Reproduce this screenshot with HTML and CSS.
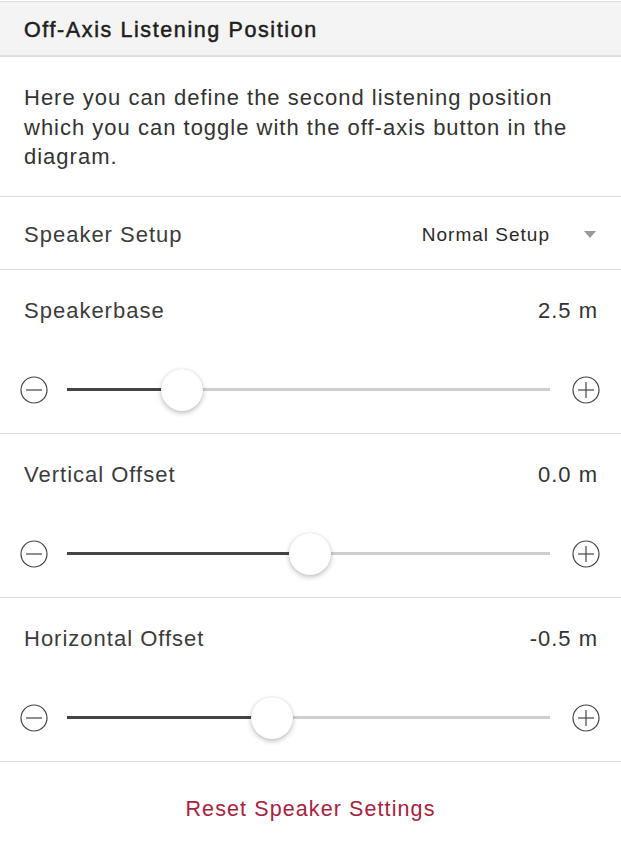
FILE: index.html
```html
<!DOCTYPE html>
<html>
<head>
<meta charset="utf-8">
<link rel="stylesheet" href="styles.css">
</head>
<body>
<div class="panel">
  <div class="header">Off-Axis Listening Position</div>
  <div class="desc">Here you can define the second listening position which you can toggle with the off-axis button in the diagram.</div>
  <div class="setup-row">
    <span class="label">Speaker Setup</span>
    <span class="select">Normal Setup<span class="caret"></span></span>
  </div>

  <div class="slider-section">
    <div class="slider-head"><span class="label">Speakerbase</span><span class="value">2.5 m</span></div>
    <div class="slider-row">
      <svg class="btn" viewBox="0 0 28 28"><circle cx="14" cy="14" r="13" /><line x1="6" y1="14" x2="22" y2="14" /></svg>
      <div class="track"><div class="fill" style="width:23.8%"></div><div class="thumb" style="left:23.8%"></div></div>
      <svg class="btn" viewBox="0 0 28 28"><circle cx="14" cy="14" r="13" /><line x1="6" y1="14" x2="22" y2="14" /><line x1="14" y1="6" x2="14" y2="22" /></svg>
    </div>
  </div>

  <div class="slider-section">
    <div class="slider-head"><span class="label">Vertical Offset</span><span class="value">0.0 m</span></div>
    <div class="slider-row">
      <svg class="btn" viewBox="0 0 28 28"><circle cx="14" cy="14" r="13" /><line x1="6" y1="14" x2="22" y2="14" /></svg>
      <div class="track"><div class="fill" style="width:50.3%"></div><div class="thumb" style="left:50.3%"></div></div>
      <svg class="btn" viewBox="0 0 28 28"><circle cx="14" cy="14" r="13" /><line x1="6" y1="14" x2="22" y2="14" /><line x1="14" y1="6" x2="14" y2="22" /></svg>
    </div>
  </div>

  <div class="slider-section">
    <div class="slider-head"><span class="label">Horizontal Offset</span><span class="value">-0.5 m</span></div>
    <div class="slider-row">
      <svg class="btn" viewBox="0 0 28 28"><circle cx="14" cy="14" r="13" /><line x1="6" y1="14" x2="22" y2="14" /></svg>
      <div class="track"><div class="fill" style="width:42.4%"></div><div class="thumb" style="left:42.4%"></div></div>
      <svg class="btn" viewBox="0 0 28 28"><circle cx="14" cy="14" r="13" /><line x1="6" y1="14" x2="22" y2="14" /><line x1="14" y1="6" x2="14" y2="22" /></svg>
    </div>
  </div>

  <div class="reset">Reset Speaker Settings</div>
</div>
</body>
</html>
```
FILE: styles.css
```css
html, body {
  margin: 0;
  padding: 0;
  background: #fff;
}
body {
  font-family: "Liberation Sans", Arial, sans-serif;
  color: #3a3a3a;
  font-size: 22px;
  letter-spacing: 1px;
}
.panel {
  width: 621px;
  padding-top: 1px;
}
.header {
  border-top: 1px solid #dedede;
  border-bottom: 2px solid #dedede;
  background: #f4f4f4;
  height: 50px;
  padding-top: 3px;
  line-height: 50px;
  padding-left: 24px;
  font-size: 21.5px;
  color: #1e1e1e;
  letter-spacing: 1.6px;
  -webkit-text-stroke: 0.5px #1e1e1e;
}
.desc {
  padding: 26px 24px 24px 24px;
  line-height: 29.5px;
  color: #333;
  border-bottom: 1px solid #dcdcdc;
}
.setup-row {
  box-sizing: border-box;
  height: 73px;
  padding: 4px 25px 0 24px;
  display: flex;
  align-items: center;
  justify-content: space-between;
  border-bottom: 1px solid #dcdcdc;
}
.label {
  color: #3c3c3c;
}
.select {
  display: flex;
  align-items: center;
  font-size: 19px;
  letter-spacing: 1px;
  color: #2a2a2a;
}
.caret {
  width: 0;
  height: 0;
  border-left: 6px solid transparent;
  border-right: 6px solid transparent;
  border-top: 7px solid #999;
  margin-left: 34px;
}
.slider-section {
  padding: 29px 0 22px;
  border-bottom: 1px solid #dcdcdc;
}
.slider-head {
  display: flex;
  justify-content: space-between;
  padding: 0 23px 0 24px;
  line-height: 24px;
  margin-bottom: 46px;
}
.value {
  color: #333;
}
.slider-row {
  height: 42px;
  display: flex;
  align-items: center;
  padding: 0 21px 0 20px;
}
.btn {
  width: 28px;
  height: 28px;
  flex: none;
  fill: none;
  stroke: #444;
  stroke-width: 1.2;
}
.track {
  flex: 1;
  position: relative;
  height: 3px;
  background: #cfcfcf;
  margin: 0 22px 0 19px;
}
.fill {
  position: absolute;
  left: 0;
  top: 0;
  bottom: 0;
  background: #444;
}
.thumb {
  position: absolute;
  top: 50%;
  width: 42px;
  height: 42px;
  border-radius: 50%;
  background: #fff;
  transform: translate(-50%, -50%);
  box-shadow: 0 2px 5px rgba(0, 0, 0, 0.25), 0 0 1px rgba(0, 0, 0, 0.15);
}
.reset {
  text-align: center;
  color: #a5233f;
  padding-top: 35px;
  font-size: 21.5px;
  letter-spacing: 1.1px;
  line-height: 24px;
}
```
